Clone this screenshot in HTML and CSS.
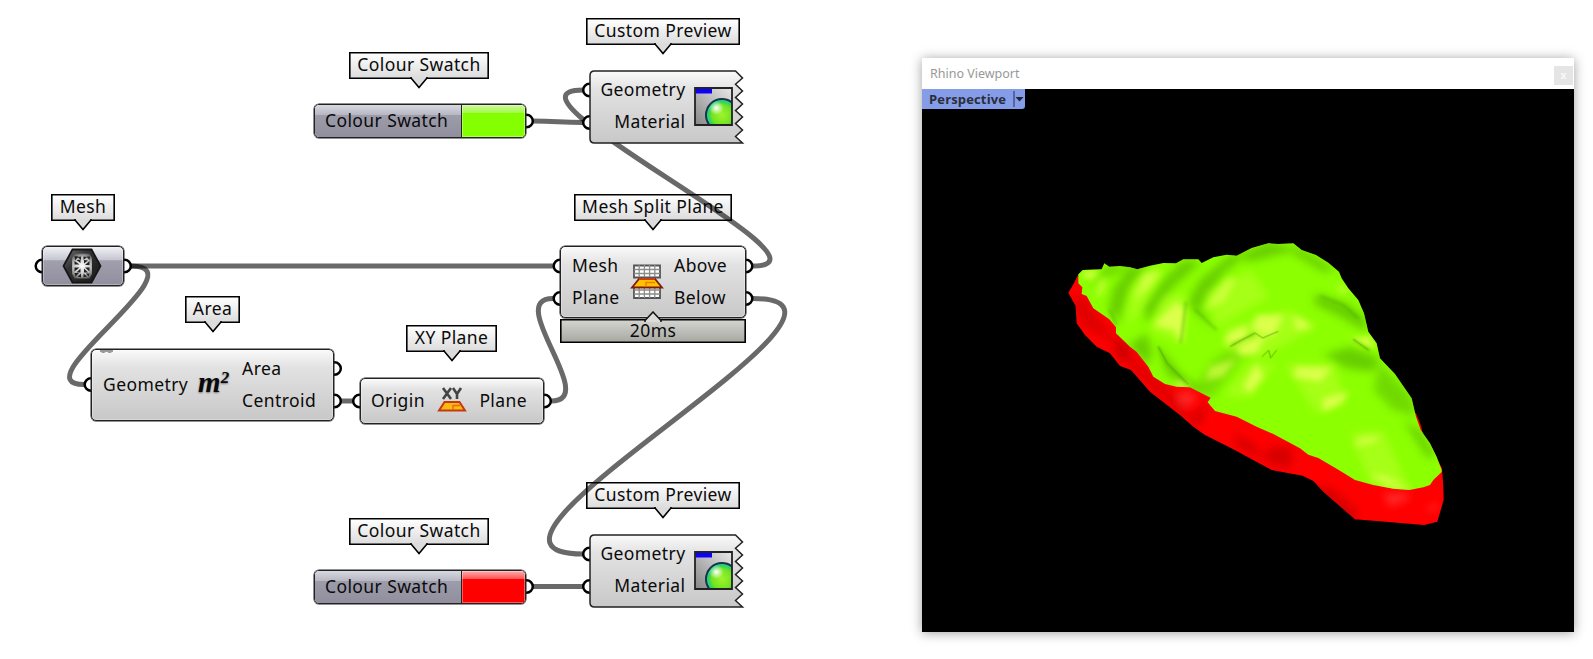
FILE: index.html
```html
<!DOCTYPE html>
<html lang="en">
<head>
<meta charset="utf-8">
<title>Mesh Split Plane</title>
<link rel="stylesheet" href="styles.css">
</head>
<body>
<main class="canvas">
  <div class="tag tag-swatch-a"><span>Colour Swatch</span><svg class="tail" viewBox="0 0 18 12"><path d="M1 0V1L9 10.5L17 1V0"/></svg></div>
  <div class="tag tag-preview-a"><span>Custom Preview</span><svg class="tail" viewBox="0 0 18 12"><path d="M1 0V1L9 10.5L17 1V0"/></svg></div>
  <div class="tag tag-mesh"><span>Mesh</span><svg class="tail" viewBox="0 0 18 12"><path d="M1 0V1L9 10.5L17 1V0"/></svg></div>
  <div class="tag tag-area"><span>Area</span><svg class="tail" viewBox="0 0 18 12"><path d="M1 0V1L9 10.5L17 1V0"/></svg></div>
  <div class="tag tag-xy"><span>XY Plane</span><svg class="tail" viewBox="0 0 18 12"><path d="M1 0V1L9 10.5L17 1V0"/></svg></div>
  <div class="tag tag-split"><span>Mesh Split Plane</span><svg class="tail" viewBox="0 0 18 12"><path d="M1 0V1L9 10.5L17 1V0"/></svg></div>
  <div class="tag tag-preview-b"><span>Custom Preview</span><svg class="tail" viewBox="0 0 18 12"><path d="M1 0V1L9 10.5L17 1V0"/></svg></div>
  <div class="tag tag-swatch-b"><span>Colour Swatch</span><svg class="tail" viewBox="0 0 18 12"><path d="M1 0V1L9 10.5L17 1V0"/></svg></div>

  <svg class="wires" viewBox="0 0 880 659">
    <g class="wire">
      <path d="M533 121C555 121 561 122.500 583 122.500"/>
      <path d="M753 266C852 266 482 90 583 90"/>
      <path d="M131 266H553"/>
      <path d="M131 266C203 266 18 384.500 84 384.500"/>
      <path d="M341 401H353"/>
      <path d="M551 401C601 401 503 298.500 553 298.500"/>
      <path d="M753 298.500C911 298.500 420 554 583 554"/>
      <path d="M533 586.500H583"/>
    </g>
    <g class="grip">
      <circle cx="526.500" cy="121" r="6.300"/><circle cx="589.500" cy="90" r="6.300"/><circle cx="589.500" cy="122.500" r="6.300"/>
      <circle cx="42" cy="266" r="6.300"/><circle cx="124.500" cy="266" r="6.300"/>
      <circle cx="91" cy="384.500" r="6.300"/><circle cx="334.500" cy="368.500" r="6.300"/><circle cx="334.500" cy="401" r="6.300"/>
      <circle cx="359.500" cy="401" r="6.300"/><circle cx="544.500" cy="401" r="6.300"/>
      <circle cx="560" cy="266" r="6.300"/><circle cx="560" cy="298.500" r="6.300"/><circle cx="746" cy="266" r="6.300"/><circle cx="746" cy="298.500" r="6.300"/>
      <circle cx="589.500" cy="554" r="6.300"/><circle cx="589.500" cy="586.500" r="6.300"/><circle cx="526.500" cy="586.500" r="6.300"/>
    </g>
  </svg>

  <div class="node swatch swatch-a"><div class="swatch-name">Colour Swatch</div><div class="swatch-color lime"></div></div>
  <div class="node swatch swatch-b"><div class="swatch-name">Colour Swatch</div><div class="swatch-color red"></div></div>

  <div class="preview preview-a">
    <svg class="jag" viewBox="0 0 156 74"><defs><linearGradient id="shell" x2="0" y2="1"><stop offset="0" stop-color="#fafafa"/><stop offset=".25" stop-color="#e2e2e2"/><stop offset="1" stop-color="#c8c8c8"/></linearGradient></defs><path d="M5.500 1H146.500L153.500 8L146.500 14.200L153.500 21L146.500 27.400L153.500 34L146.500 40.600L153.500 47L146.500 53.600L153.500 60L146.500 66.500L153.500 73H5.500Q1 73 1 68.500V5.500Q1 1 5.500 1Z" fill="url(#shell)" stroke="#222" stroke-width="1.500"/></svg>
    <div class="ports right"><span>Geometry</span><span>Material</span></div>
    <svg class="ball" viewBox="0 0 39 39"><defs><linearGradient id="pane" x1="1" x2="0" y2="1"><stop offset="0" stop-color="#e8e8e8"/><stop offset="1" stop-color="#868686"/></linearGradient><radialGradient id="orb" cx=".5" cy=".5" r=".52"><stop offset="0" stop-color="#9df42c"/><stop offset=".6" stop-color="#74e321"/><stop offset=".8" stop-color="#2fd35c"/><stop offset="1" stop-color="#12d8e8"/></radialGradient><radialGradient id="spark"><stop offset="0" stop-color="#fff"/><stop offset="1" stop-color="#fff" stop-opacity="0"/></radialGradient><clipPath id="ballclip"><path d="M1 1h37v37H1z"/></clipPath></defs><path d="M1 1h37v37H1z" fill="url(#pane)"/><g clip-path="url(#ballclip)"><circle cx="28" cy="28" r="16" fill="url(#orb)" stroke="#193348" stroke-width="2"/><ellipse cx="22.500" cy="21" rx="7.500" ry="7" fill="url(#spark)"/></g><path d="M1.500 1.500h16.500v5H1.500z" fill="#0d00ff"/><path d="M1 1h37v37H1z" fill="none" stroke="#222" stroke-width="1.800"/></svg>
  </div>
  <div class="preview preview-b">
    <svg class="jag" viewBox="0 0 156 74"><path d="M5.500 1H146.500L153.500 8L146.500 14.200L153.500 21L146.500 27.400L153.500 34L146.500 40.600L153.500 47L146.500 53.600L153.500 60L146.500 66.500L153.500 73H5.500Q1 73 1 68.500V5.500Q1 1 5.500 1Z" fill="url(#shell)" stroke="#222" stroke-width="1.500"/></svg>
    <div class="ports right"><span>Geometry</span><span>Material</span></div>
    <svg class="ball" viewBox="0 0 39 39"><path d="M1 1h37v37H1z" fill="url(#pane)"/><g clip-path="url(#ballclip)"><circle cx="28" cy="28" r="16" fill="url(#orb)" stroke="#193348" stroke-width="2"/><ellipse cx="22.500" cy="21" rx="7.500" ry="7" fill="url(#spark)"/></g><path d="M1.500 1.500h16.500v5H1.500z" fill="#0d00ff"/><path d="M1 1h37v37H1z" fill="none" stroke="#222" stroke-width="1.800"/></svg>
  </div>

  <div class="node mesh">
    <svg width="40" height="36" viewBox="0 0 40 36"><defs><linearGradient id="hex" x2="1" y2="1"><stop offset="0" stop-color="#777"/><stop offset=".35" stop-color="#333"/><stop offset="1" stop-color="#181818"/></linearGradient><radialGradient id="lattice" gradientUnits="userSpaceOnUse" cx="20" cy="18" r="14"><stop offset="0" stop-color="#fff"/><stop offset=".6" stop-color="#c4c4c4"/><stop offset="1" stop-color="#555"/></radialGradient></defs><path d="M10.500 1.500h19L38.500 18l-9 16.500h-19L1.500 18z" fill="url(#hex)" stroke="#161616" stroke-width="1.800"/><path d="M12.500 5.500H27.500L30 10V26L27.500 30.500H12.500L10 26V10Z" fill="url(#lattice)"/><g fill="#222"><path d="M12.500 8l4 .5-3.500 4zM19 8.500v3.500l-3.500-3zM21.500 8.500v3.500l3.500-3zM24.500 8.500l3.500 0-.5 3.500zM12.500 13l5 3.500h-5zM14.500 12l4-.5v3.500zM22 12l4 .5-4 3zM27.500 13v4h-4.500zM12.500 19.500h5l-5 4zM18.500 20.500v4h-4zM22 20.500l4 4h-4zM23 19.500h4.500v4zM12.500 25h4.500l-3.500 3.500zM19 25.500v4l-3.500-1zM21.500 25.500l3.500 3-3.500 1zM24 25.500h3.500l-1 3z"/></g></svg>
  </div>

  <div class="node area">
    <i class="dots"></i>
    <div class="ports"><span>Geometry</span></div>
    <div class="sqm">m<sup>2</sup></div>
    <div class="ports"><span>Area</span><span>Centroid</span></div>
  </div>

  <div class="node xyplane">
    <div class="ports"><span>Origin</span></div>
    <svg width="32" height="28" viewBox="0 0 32 28"><g fill="none" stroke="#444" stroke-width="2.600"><path d="M7 1L15 12M15 1L7 12M17 1L21 7L25 1M21 6.500V12"/></g><path d="M8.500 15h15L29 23.500H3z" fill="#fdb813" stroke="#c33a12" stroke-width="2"/><path d="M17 23V18.500H24" fill="none" stroke="#e96a0c" stroke-width="1.400"/></svg>
    <div class="ports"><span>Plane</span></div>
  </div>

  <div class="node split">
    <div class="ports"><span>Mesh</span><span>Plane</span></div>
    <svg width="34" height="36" viewBox="0 0 34 36"><path d="M4 1.500h26v12H4zM4 22h26v12H4z" fill="#fff" stroke="#555" stroke-width="1.800"/><path d="M9.200 1v12M14.400 1v12M19.600 1v12M24.800 1v12M4 5.500h26M4 9.500h26M9.200 22v12M14.400 22v12M19.600 22v12M24.800 22v12M4 26h26M4 30h26" stroke="#8c8c8c" stroke-width="1.300"/><path d="M9 15h16l7 8.500H2z" fill="#ffc400" stroke="#7d1c10" stroke-width="1.800"/><path d="M9 15h16" stroke="#e44c18" stroke-width="1.500"/><path d="M16 23V18.500H25" fill="none" stroke="#f07c00" stroke-width="1.500"/></svg>
    <div class="ports"><span>Above</span><span>Below</span></div>
  </div>
  <div class="timer"><svg class="notch" viewBox="0 0 18 11"><path d="M1 11V9.500L9 1L17 9.500V11" fill="#dcdcd8" stroke="#111" stroke-width="1.500"/></svg><span>20ms</span></div>

  <section class="window">
    <header class="titlebar"><span>Rhino Viewport</span><b class="close">x</b></header>
    <div class="scene">
      <div class="view-tab"><span>Perspective</span><svg width="12" height="16" viewBox="0 0 12 16"><path d="M1 0V16" stroke="#263050"/><path d="M2.500 6h8L6.500 10.500z" fill="#20263a"/></svg></div>
      <svg class="model" viewBox="0 0 652 543">
        <defs>
          <filter id="soft" x="-30%" y="-30%" width="160%" height="160%"><feGaussianBlur stdDeviation="13"/></filter>
          <filter id="glow" x="-30%" y="-30%" width="160%" height="160%"><feGaussianBlur stdDeviation="9"/></filter>
          <filter id="fine" x="-30%" y="-30%" width="160%" height="160%"><feGaussianBlur stdDeviation="4"/></filter>
          <path id="upper" d="M85 133L98 120L155 118L163 100L178 110L210 108L240 112L262 118L300 107L340 99L378 100L400 88L445 88L455 99L490 82L530 74L560 77L605 54L655 40L685 42L730 40L755 60L798 75L835 98L867 125L875 145L895 175L925 210L942 250L955 305L980 340L990 385L1035 432L1085 505L1098 560L1112 600L1140 640L1160 680L1175 720V726L1150 750L1140 765L1120 772L1078 780L1030 776L970 765L915 750L870 722L805 684L775 674L750 655L670 612L620 590L560 560L495 543L473 517L482 503L420 472L380 470L345 462L310 440L295 410L260 365L240 350L198 310V292L178 268L130 235L110 198L95 192L97 172L85 160Z"/>
          <path id="lower" d="M85 133L72 160L55 188L77 228L80 280L105 315L140 350L180 370L210 408L243 420L300 485L390 555L430 590L465 615L550 658L665 720L758 737L790 753L820 785L915 868L1123 885L1162 875L1181 810L1180 770L1176 715L1150 665L1120 615L1112 585L1098 550L900 500L400 300Z"/>
          <clipPath id="upperclip"><use href="#upper"/></clipPath>
          <clipPath id="lowerclip"><use href="#lower"/></clipPath>
        </defs>
        <g transform="translate(128 141) scale(.33333)">
          <use href="#lower" fill="#f00"/>
          <g clip-path="url(#lowerclip)">
          <g filter="url(#soft)" opacity=".75">
            <path d="M60 200L100 290L190 340L240 410L310 480L400 560L440 590L380 500L290 420L240 370L180 310L100 200Z" fill="#d40000"/>
            <path d="M440 540L475 520L450 590L420 570ZM550 610L610 640L650 690L560 650ZM660 650L730 655L720 720L640 690ZM790 770L840 770L930 850L900 870Z" fill="#c80000"/>
            <path d="M380 490L430 485L440 510L400 530ZM1000 790L1080 790L1070 810L1020 830ZM1120 840L1165 820L1160 840Z" fill="#ff3838"/>
            <path d="M198 320L245 365L215 400L190 350Z" fill="#b80000"/>
          </g>
          </g>
          <use href="#upper" fill="#8cff00"/>
          <g clip-path="url(#upperclip)">
            <g filter="url(#soft)" fill="#62c600" opacity=".85">
              <path d="M240 110L300 107L240 170L205 280L175 240L190 175Z"/>
              <path d="M110 180L170 110L250 110L150 145Z"/>
              <path d="M295 410L235 345L290 310L305 360Z"/>
              <path d="M400 90L455 95L370 170L290 280L280 230L340 150Z"/>
              <path d="M410 220L450 150L540 75L600 65L520 130L450 230L490 300L430 240Z"/>
              <path d="M560 77L655 35L760 60L860 120L820 125L720 65L600 95Z"/>
              <path d="M800 190L890 220L945 260L950 305L870 260L790 220Z"/>
              <path d="M820 375L900 350L990 385L970 425L890 415Z"/>
              <path d="M990 400L1085 500L1100 560L1030 540L970 480Z" opacity=".75"/>
              <path d="M1060 570L1110 600L1160 680L1130 680Z"/>
              <path d="M320 340L390 430L490 500L420 480L350 430Z"/>
              <path d="M490 390L580 330L650 310L570 390L490 500L430 480Z" opacity=".6"/>
            </g>
            <g filter="url(#soft)" fill="#b8ff28" opacity=".6">
              <path d="M270 130L340 110L280 230L230 290L240 200Z"/>
              <path d="M340 200L410 190L400 340L300 300Z"/>
              <path d="M470 190L600 120L660 200L500 290Z"/>
              <path d="M520 300L720 240L800 290L640 380L540 370Z"/>
              <path d="M600 400L680 400L600 500L520 500Z"/>
              <path d="M700 400L850 400L890 520L800 550Z"/>
              <path d="M900 610L1000 600L1080 780L960 760Z"/>
            </g>
            <g filter="url(#glow)" fill="#dcff4c">
              <path d="M100 125L148 122L125 148L100 140Z"/>
              <path d="M285 130L335 125L300 170L250 210Z" opacity=".75"/>
              <path d="M380 215L405 240L395 340L370 300L310 285Z"/>
              <path d="M150 150L170 140L160 190L135 200Z" opacity=".6"/>
              <path d="M530 145L560 145L520 215L460 240Z" opacity=".7"/>
              <path d="M620 255L700 255L670 320L605 300Z"/>
              <path d="M535 310L590 285L590 325L520 345Z"/>
              <path d="M560 350L650 310L620 370L570 375Z"/>
              <path d="M480 410L560 385L520 440L465 450Z" opacity=".7"/>
              <path d="M620 400L640 440L600 490L580 470Z"/>
              <path d="M730 255L790 290L740 300Z"/>
              <path d="M740 410L845 415L810 455L730 440Z"/>
              <path d="M820 505L900 485L870 520L820 545Z"/>
              <path d="M900 325L960 320L980 355L930 340Z"/>
              <path d="M930 620L990 615L970 640L910 650Z" opacity=".7"/>
              <path d="M960 730L1010 735L1090 780L1010 775Z" opacity=".7"/>
              <path d="M860 160L905 185L870 190Z" opacity=".6"/>
              <path d="M375 455L405 455L420 472L380 470Z"/>
            </g>
            <g filter="url(#fine)" fill="none" stroke="#429c00" stroke-width="4" opacity=".7">
              <path d="M408 215L400 280L392 340M325 350L350 400L410 460M178 240L200 285M435 238L500 300M545 345L615 310M810 198L880 225L925 265M908 328L960 362"/>
            </g>
            <path d="M540 350L570 333L615 309L638 324L685 304M636 380L656 361L662 384L680 360M325 350L352 400L415 463M910 328L955 360" fill="none" stroke="#55a300" stroke-width="2.500"/>
          </g>
        </g>
      </svg>
    </div>
  </section>
</main>
</body>
</html>
```
FILE: styles.css
```css
* { box-sizing: border-box; }
body { margin: 0; background: #fff; }

.canvas {
  position: relative;
  width: 1593px;
  height: 659px;
  overflow: hidden;
  font: 17.500px/32px "Noto Sans", "Open Sans", sans-serif;
  letter-spacing: .4px;
  color: #0a0a0a;
}
.canvas span { white-space: nowrap; }
.wires { position: absolute; left: 0; top: 0; width: 880px; height: 659px; }
.wire { fill: none; stroke: #000; stroke-opacity: .59; stroke-width: 5; }
.grip { fill: #fff; stroke: #000; stroke-width: 2.5; }

/* Floating name tags */
.tag {
  position: absolute;
  height: 27px;
  display: flex;
  justify-content: center;
  align-items: center;
  padding-bottom: 2px;
  line-height: 23px;
  border: 1px solid #000;
  background: linear-gradient(#fff, #dcdcdc);
  box-shadow: inset 0 0 0 .6px #000;
}
.tail { position: absolute; left: calc(50% - 9px); top: calc(100% - .8px); width: 18px; height: 12px; }
.tail path { fill: #dcdcdc; stroke: #000; stroke-width: 1.600px; }
.tag-swatch-a { left: 349px; top: 52px; width: 140px; }
.tag-preview-a { left: 586px; top: 18px; width: 154px; }
.tag-mesh { left: 51px; top: 194px; width: 64px; }
.tag-area { left: 185px; top: 296px; width: 55px; }
.tag-xy { left: 406px; top: 325px; width: 91px; }
.tag-split { left: 574px; top: 194px; width: 158px; }
.tag-preview-b { left: 586px; top: 482px; width: 154px; }
.tag-swatch-b { left: 349px; top: 518px; width: 140px; }

/* Components */
.node {
  position: absolute;
  display: flex;
  align-items: center;
  border: 1px solid #222;
  border-radius: 5px;
  background: linear-gradient(#fafafa, #e2e2e2 25%, #c8c8c8);
  box-shadow: 0 0 0 .5px #222, inset 0 0 0 1px rgba(255, 255, 255, .3);
}
.ports { display: flex; flex-direction: column; line-height: 32.500px; position: relative; top: -1px; }
.ports.right { align-items: flex-end; }

.swatch { width: 212px; height: 34px; align-items: stretch; overflow: hidden; }
.swatch-a { left: 314px; top: 104px; }
.swatch-b { left: 314px; top: 570px; }
.swatch-name {
  width: 147px;
  padding-left: 10px;
  line-height: 30px;
  white-space: nowrap;
  border-right: 1px solid #222;
  background: linear-gradient(#d8d8e0, #b8b8c4 30%, #9d9caa 32%, #918f9e);
}
.swatch-color { flex: 1; box-shadow: inset 0 0 0 1px rgba(255, 255, 255, .35); }
.lime { background: linear-gradient(#cdf7a0, #a4fa4a 24%, #84ff00 26%); }
.red { background: linear-gradient(#ffaaaa, #ff5757 24%, #f00 26%); }

.preview { position: absolute; left: 588.500px; width: 156px; height: 74px; display: flex; padding: 4px 0 0 12px; }
.preview-a { top: 69.500px; }
.preview-b { top: 533.500px; }
.preview .ports { width: 85px; }
.jag { position: absolute; left: 0; top: 0; width: 156px; height: 74px; }
.ball { position: relative; width: 39px; height: 39px; margin: 13px 0 0 8px; }

.mesh {
  left: 42px; top: 246px; width: 82px; height: 40px;
  justify-content: center;
  padding-right: 3px;
  background: linear-gradient(#f0f0f5, #c6c6d1 34%, #a19fae 36%, #918f9e);
}
.area { left: 91px; top: 349px; width: 243px; height: 72px; padding-left: 11px; }
.sqm { width: 46px; margin-left: 10px; margin-right: -2px; font: italic bold 29px/40px "Liberation Serif", serif; letter-spacing: 0; text-shadow: 0 1px 2px #777; position: relative; top: -3px; }
.sqm sup { font-size: 17px; line-height: 0; vertical-align: 9px; }
.dots { position: absolute; left: 8px; top: 0; width: 13px; height: 3px; background: radial-gradient(ellipse at top, #999 70%, transparent 72%) 0 0 / 6.500px 3px; }
.xyplane { left: 360px; top: 378px; width: 184px; height: 46px; padding: 0 16px 0 10px; justify-content: space-between; }
.split { left: 560px; top: 246px; width: 186px; height: 72px; padding: 0 18px 0 11px; justify-content: space-between; }
.timer {
  position: absolute; left: 560px; top: 319px; width: 186px; height: 24px;
  display: flex; justify-content: center; line-height: 20px;
  border: 1px solid #000;
  background: linear-gradient(#d4d4d0, #a7a8a2);
  box-shadow: inset 0 0 0 .6px #000;
}
.notch { position: absolute; left: 83px; top: -9.500px; width: 18px; height: 11px; }

/* Rhino viewport */
.window {
  position: absolute; left: 922px; top: 58px; width: 652px; height: 574px;
  background: #fff;
  box-shadow: 0 1px 11px rgba(0, 0, 0, .38);
}
.titlebar { height: 31px; display: flex; justify-content: space-between; padding: 0 1px 0 8px; font-size: 12.500px; line-height: 31px; letter-spacing: 0; color: #999; }
.close { width: 19px; height: 19px; margin-top: 8px; background: #e5e5e5; color: #f8f8f8; font: bold 10px/18px "Open Sans", sans-serif; text-align: center; }
.scene { position: relative; height: 543px; background: #000; }
.view-tab {
  position: absolute; left: 0; top: 0; width: 103px; height: 20px;
  display: flex; align-items: center; justify-content: space-between; padding: 0 0 0 7px;
  background: #859de9; color: #2a2e3a;
  border-bottom-right-radius: 3px;
  font: bold 13px/20px "Open Sans", sans-serif; letter-spacing: .15px;
}
.model { display: block; width: 652px; height: 543px; }
```
